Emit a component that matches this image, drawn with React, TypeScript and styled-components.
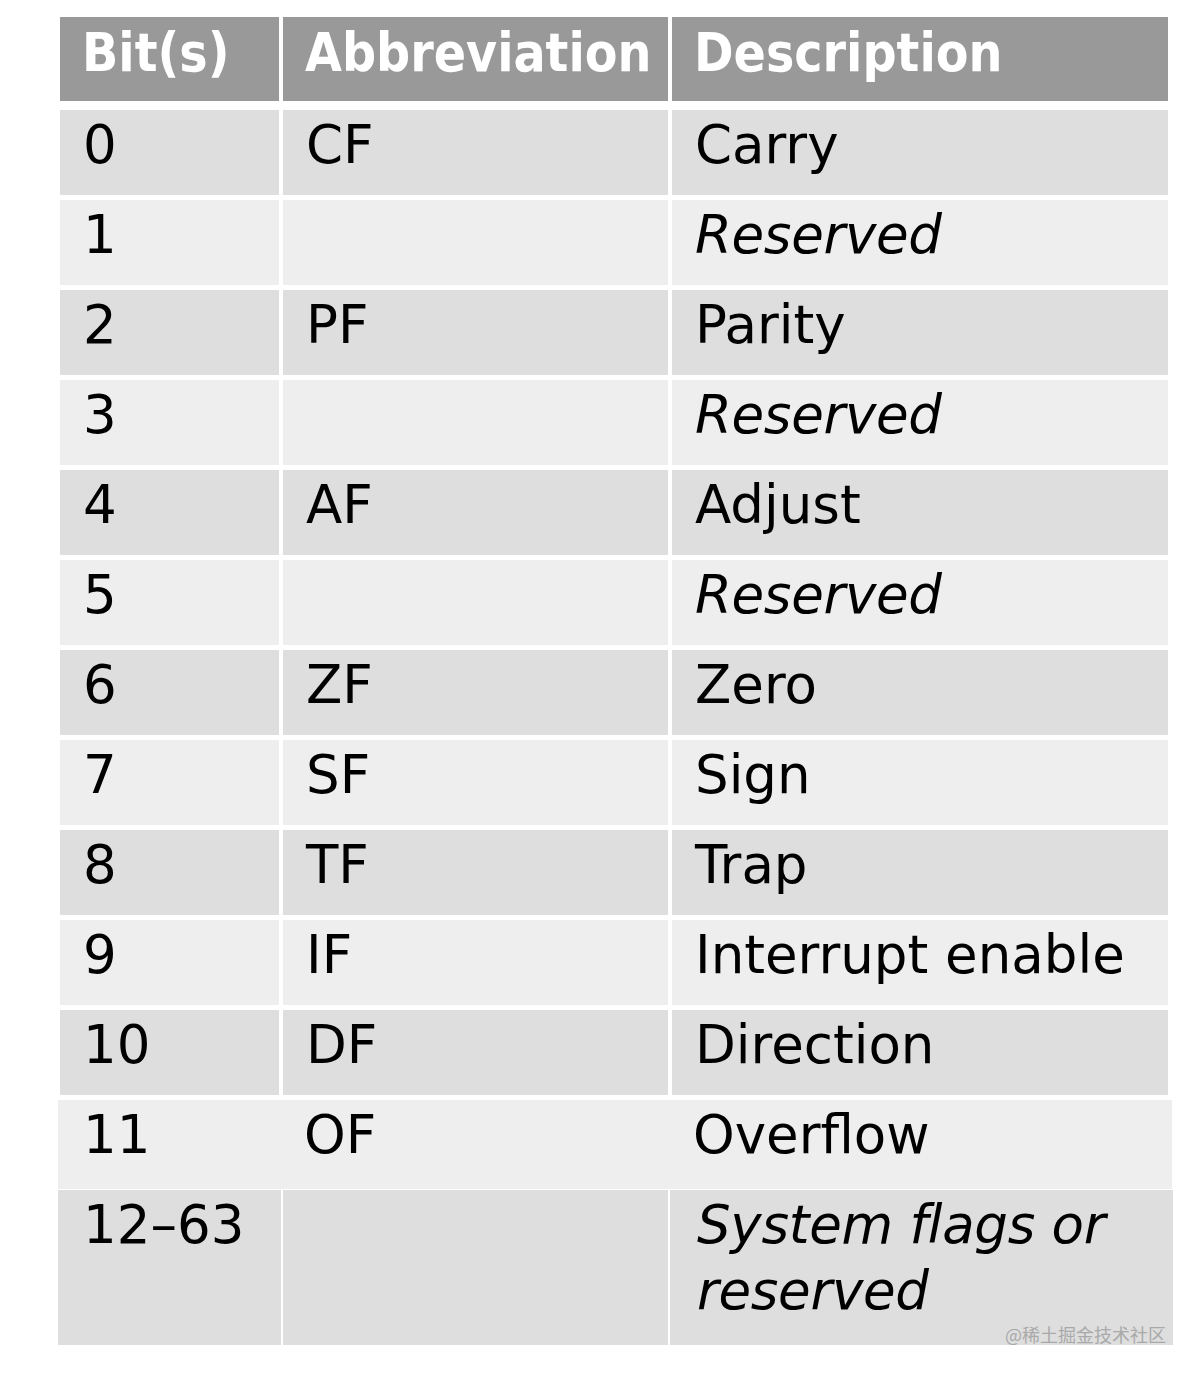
import React from "react";
import styled, { createGlobalStyle } from "styled-components";

const Global = createGlobalStyle`
  html, body { margin: 0; padding: 0; background: #ffffff; }
  body { font-family: "DejaVu Sans", "Noto Sans", sans-serif; }
`;

const Page = styled.div`
  width: 1198px;
  height: 1374px;
  box-sizing: border-box;
  padding: 17px 0 0 60px;
  background: #ffffff;
`;

const Table = styled.div`
  display: flex;
  flex-direction: column;
  gap: 5px;
  width: 1109px;
`;

const Row = styled.div<{ $seamless?: boolean; $tone: string; $height: number; $wide?: boolean }>`
  display: grid;
  grid-template-columns: 219px 385px 496px;
  column-gap: 4px;
  height: ${(p) => p.$height}px;
  background: ${(p) => (p.$seamless ? p.$tone : "transparent")};
  margin: ${(p) => (p.$wide ? "0 -3px 0 -2px" : "0")};
`;

const LastRow = styled.div`
  display: grid;
  grid-template-columns: 223px 385px 503px;
  column-gap: 2px;
  height: 155px;
  margin: -4px -3px 0 -2px;
`;

const HeaderRow = styled(Row)`
  margin-bottom: 4px;
`;

const Cell = styled.div<{ $tone: string; $inset?: number }>`
  position: relative;
  box-sizing: border-box;
  background: ${(p) => p.$tone};
  padding: 2px 20px 0 ${(p) => p.$inset ?? 23}px;
  font-size: 53px;
  line-height: 66px;
  color: #000000;
  font-family: "DejaVu Sans", "Noto Sans", sans-serif;
`;

const HeadCell = styled.div`
  box-sizing: border-box;
  background: #999999;
  color: #ffffff;
  padding: 3px 10px 0 22px;
  font-family: "DejaVu Sans Condensed", "DejaVu Sans", sans-serif;
  font-weight: bold;
  font-size: 53px;
  line-height: 66px;
  white-space: nowrap;
`;

const Italic = styled.span`
  font-style: italic;
  letter-spacing: -0.3px;
`;

const Watermark = styled.span`
  position: absolute;
  right: 7px;
  bottom: 2px;
  font-family: "Noto Sans CJK SC", sans-serif;
  font-size: 18px;
  line-height: 18px;
  color: #a9a9a9;
  font-style: normal;
`;

const DARK = "#dedede";
const LIGHT = "#eeeeee";

type Entry = { bit: string; abbr: string; desc: string; italic?: boolean };

const rows: Entry[] = [
  { bit: "0", abbr: "CF", desc: "Carry" },
  { bit: "1", abbr: "", desc: "Reserved", italic: true },
  { bit: "2", abbr: "PF", desc: "Parity" },
  { bit: "3", abbr: "", desc: "Reserved", italic: true },
  { bit: "4", abbr: "AF", desc: "Adjust" },
  { bit: "5", abbr: "", desc: "Reserved", italic: true },
  { bit: "6", abbr: "ZF", desc: "Zero" },
  { bit: "7", abbr: "SF", desc: "Sign" },
  { bit: "8", abbr: "TF", desc: "Trap" },
  { bit: "9", abbr: "IF", desc: "Interrupt enable" },
  { bit: "10", abbr: "DF", desc: "Direction" },
];

export default function App() {
  return (
    <>
      <Global />
      <Page>
        <Table>
          <HeaderRow $tone="#999999" $height={84}>
            <HeadCell>Bit(s)</HeadCell>
            <HeadCell>Abbreviation</HeadCell>
            <HeadCell>Description</HeadCell>
          </HeaderRow>
          {rows.map((r, i) => {
            const tone = i % 2 === 0 ? DARK : LIGHT;
            return (
              <Row key={r.bit} $tone={tone} $height={85}>
                <Cell $tone={tone}>{r.bit}</Cell>
                <Cell $tone={tone}>{r.abbr}</Cell>
                <Cell $tone={tone}>{r.italic ? <Italic>{r.desc}</Italic> : r.desc}</Cell>
              </Row>
            );
          })}
          <Row $tone={LIGHT} $height={89} $seamless $wide>
            <Cell $tone={LIGHT} $inset={25}>11</Cell>
            <Cell $tone={LIGHT}>OF</Cell>
            <Cell $tone={LIGHT}>Overflow</Cell>
          </Row>
          <LastRow>
            <Cell $tone={DARK} $inset={25}>12–63</Cell>
            <Cell $tone={DARK}></Cell>
            <Cell $tone={DARK} $inset={27}>
              <Italic>System flags or reserved</Italic>
              <Watermark>@稀土掘金技术社区</Watermark>
            </Cell>
          </LastRow>
        </Table>
      </Page>
    </>
  );
}
